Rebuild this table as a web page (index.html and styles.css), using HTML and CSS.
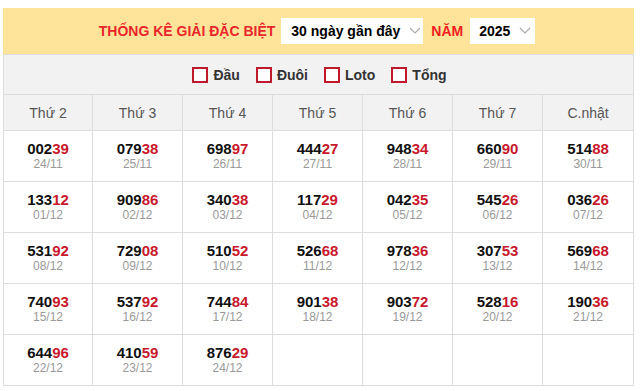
FILE: index.html
```html
<!DOCTYPE html>
<html lang="vi">
<head>
<meta charset="utf-8">
<link rel="stylesheet" href="styles.css">
</head>
<body>
<div class="wrap">
  <div class="head">
    <span class="title">THỐNG KÊ GIẢI ĐẶC BIỆT</span>
    <div class="sel sel-days">30 ngày gần đây<svg class="chev" viewBox="0 0 12 7" width="12" height="7"><path d="M1 1 L6 6 L11 1" fill="none" stroke="#aaa" stroke-width="1.2"/></svg></div>
    <span class="nam">NĂM</span>
    <div class="sel sel-year">2025<svg class="chev" viewBox="0 0 12 7" width="12" height="7"><path d="M1 1 L6 6 L11 1" fill="none" stroke="#aaa" stroke-width="1.2"/></svg></div>
  </div>
  <div class="filter">
    <label class="chk"><span class="box"></span>Đầu</label>
    <label class="chk"><span class="box"></span>Đuôi</label>
    <label class="chk"><span class="box"></span>Loto</label>
    <label class="chk"><span class="box"></span>Tổng</label>
  </div>
  <div class="grid">
    <div class="th">Thứ 2</div><div class="th">Thứ 3</div><div class="th">Thứ 4</div><div class="th">Thứ 5</div><div class="th">Thứ 6</div><div class="th">Thứ 7</div><div class="th">C.nhật</div>

    <div class="td"><b>002<i>39</i></b><span>24/11</span></div>
    <div class="td"><b>079<i>38</i></b><span>25/11</span></div>
    <div class="td"><b>698<i>97</i></b><span>26/11</span></div>
    <div class="td"><b>444<i>27</i></b><span>27/11</span></div>
    <div class="td"><b>948<i>34</i></b><span>28/11</span></div>
    <div class="td"><b>660<i>90</i></b><span>29/11</span></div>
    <div class="td"><b>514<i>88</i></b><span>30/11</span></div>

    <div class="td"><b>133<i>12</i></b><span>01/12</span></div>
    <div class="td"><b>909<i>86</i></b><span>02/12</span></div>
    <div class="td"><b>340<i>38</i></b><span>03/12</span></div>
    <div class="td"><b>117<i>29</i></b><span>04/12</span></div>
    <div class="td"><b>042<i>35</i></b><span>05/12</span></div>
    <div class="td"><b>545<i>26</i></b><span>06/12</span></div>
    <div class="td"><b>036<i>26</i></b><span>07/12</span></div>

    <div class="td"><b>531<i>92</i></b><span>08/12</span></div>
    <div class="td"><b>729<i>08</i></b><span>09/12</span></div>
    <div class="td"><b>510<i>52</i></b><span>10/12</span></div>
    <div class="td"><b>526<i>68</i></b><span>11/12</span></div>
    <div class="td"><b>978<i>36</i></b><span>12/12</span></div>
    <div class="td"><b>307<i>53</i></b><span>13/12</span></div>
    <div class="td"><b>569<i>68</i></b><span>14/12</span></div>

    <div class="td"><b>740<i>93</i></b><span>15/12</span></div>
    <div class="td"><b>537<i>92</i></b><span>16/12</span></div>
    <div class="td"><b>744<i>84</i></b><span>17/12</span></div>
    <div class="td"><b>901<i>38</i></b><span>18/12</span></div>
    <div class="td"><b>903<i>72</i></b><span>19/12</span></div>
    <div class="td"><b>528<i>16</i></b><span>20/12</span></div>
    <div class="td"><b>190<i>36</i></b><span>21/12</span></div>

    <div class="td"><b>644<i>96</i></b><span>22/12</span></div>
    <div class="td"><b>410<i>59</i></b><span>23/12</span></div>
    <div class="td"><b>876<i>29</i></b><span>24/12</span></div>
    <div class="td"></div>
    <div class="td"></div>
    <div class="td"></div>
    <div class="td"></div>
  </div>
</div>
</body>
</html>
```

FILE: styles.css
```css
* { box-sizing: border-box; }
html, body { margin: 0; padding: 0; background: #fff; }
body { font-family: Arial, "Liberation Sans", sans-serif; color: #222; }

.wrap {
  width: 631px;
  margin: 8px 0 0 3px;
}

.head {
  height: 47px;
  background: #fee49a;
  border-bottom: 1px solid #ddd;
  display: flex;
  align-items: center;
  justify-content: center;
  padding-right: 3px;
  padding-bottom: 1px;
}
.title {
  color: #e8262a;
  font-weight: bold;
  font-size: 14px;
  margin-right: 6px;
}
.nam {
  color: #f01e1e;
  font-weight: bold;
  font-size: 14px;
  margin: 0 7px 0 8px;
}
.sel {
  background: #fff;
  height: 26px;
  display: flex;
  align-items: center;
  font-size: 14px;
  font-weight: bold;
  color: #000;
  padding-left: 10px;
}
.sel-days { width: 142px; }
.sel-year { width: 65px; padding-left: 9px; }
.chev { margin-left: 9px; }

.filter {
  height: 40px;
  background: #f2f2f2;
  border-left: 1px solid #ddd;
  border-right: 1px solid #ddd;
  border-bottom: 1px solid #ddd;
  display: flex;
  align-items: center;
  justify-content: center;
  gap: 16px;
  padding-left: 2px;
}
.chk {
  display: flex;
  align-items: center;
  font-size: 14px;
  font-weight: bold;
  color: #333;
}
.box {
  width: 16px;
  height: 16px;
  border: 2px solid #c0192b;
  background: #fff;
  margin-right: 5px;
}

.grid {
  display: grid;
  grid-template-columns: 89px repeat(5, 90px) 1fr;
  border-left: 1px solid #ddd;
}
.th {
  height: 36px;
  background: #f2f2f2;
  border-right: 1px solid #ddd;
  border-bottom: 1px solid #ddd;
  display: flex;
  align-items: center;
  justify-content: center;
  font-size: 14px;
  color: #555;
}
.td {
  height: 51px;
  border-right: 1px solid #ddd;
  border-bottom: 1px solid #ddd;
  display: flex;
  flex-direction: column;
  align-items: center;
  justify-content: center;
  padding-bottom: 1px;
}
.td b {
  font-size: 15px;
  font-weight: bold;
  color: #111;
  line-height: 17px;
}
.td i {
  font-style: normal;
  color: #c8182c;
}
.td span {
  font-size: 12px;
  color: #999;
  line-height: 15px;
}
```
